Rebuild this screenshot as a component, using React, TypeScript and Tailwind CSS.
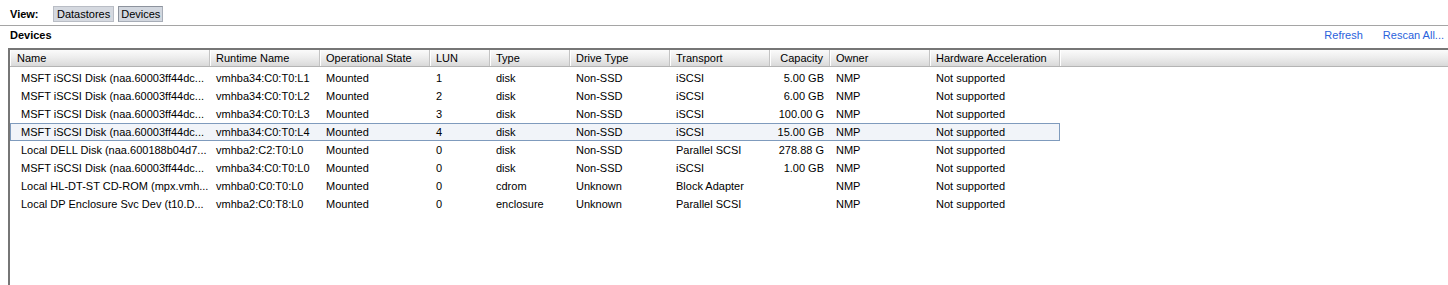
import React from "react";

type Row = {
  name: string;
  runtime: string;
  state: string;
  lun: string;
  type: string;
  drive: string;
  transport: string;
  capacity: string;
  owner: string;
  hw: string;
  selected?: boolean;
};

const rows: Row[] = [
  { name: "MSFT iSCSI Disk (naa.60003ff44dc...", runtime: "vmhba34:C0:T0:L1", state: "Mounted", lun: "1", type: "disk", drive: "Non-SSD", transport: "iSCSI", capacity: "5.00 GB", owner: "NMP", hw: "Not supported" },
  { name: "MSFT iSCSI Disk (naa.60003ff44dc...", runtime: "vmhba34:C0:T0:L2", state: "Mounted", lun: "2", type: "disk", drive: "Non-SSD", transport: "iSCSI", capacity: "6.00 GB", owner: "NMP", hw: "Not supported" },
  { name: "MSFT iSCSI Disk (naa.60003ff44dc...", runtime: "vmhba34:C0:T0:L3", state: "Mounted", lun: "3", type: "disk", drive: "Non-SSD", transport: "iSCSI", capacity: "100.00 G", owner: "NMP", hw: "Not supported" },
  { name: "MSFT iSCSI Disk (naa.60003ff44dc...", runtime: "vmhba34:C0:T0:L4", state: "Mounted", lun: "4", type: "disk", drive: "Non-SSD", transport: "iSCSI", capacity: "15.00 GB", owner: "NMP", hw: "Not supported", selected: true },
  { name: "Local DELL Disk (naa.600188b04d7...", runtime: "vmhba2:C2:T0:L0", state: "Mounted", lun: "0", type: "disk", drive: "Non-SSD", transport: "Parallel SCSI", capacity: "278.88 G", owner: "NMP", hw: "Not supported" },
  { name: "MSFT iSCSI Disk (naa.60003ff44dc...", runtime: "vmhba34:C0:T0:L0", state: "Mounted", lun: "0", type: "disk", drive: "Non-SSD", transport: "iSCSI", capacity: "1.00 GB", owner: "NMP", hw: "Not supported" },
  { name: "Local HL-DT-ST CD-ROM (mpx.vmh...", runtime: "vmhba0:C0:T0:L0", state: "Mounted", lun: "0", type: "cdrom", drive: "Unknown", transport: "Block Adapter", capacity: "", owner: "NMP", hw: "Not supported" },
  { name: "Local DP Enclosure Svc Dev (t10.D...", runtime: "vmhba2:C0:T8:L0", state: "Mounted", lun: "0", type: "enclosure", drive: "Unknown", transport: "Parallel SCSI", capacity: "", owner: "NMP", hw: "Not supported" },
];

const headers: { label: string; w: string; right?: boolean }[] = [
  { label: "Name", w: "w-[200px]" },
  { label: "Runtime Name", w: "w-[110px]" },
  { label: "Operational State", w: "w-[110px]" },
  { label: "LUN", w: "w-[60px]" },
  { label: "Type", w: "w-[80px]" },
  { label: "Drive Type", w: "w-[100px]" },
  { label: "Transport", w: "w-[100px]" },
  { label: "Capacity", w: "w-[60px]", right: true },
  { label: "Owner", w: "w-[100px]" },
  { label: "Hardware Acceleration", w: "w-[130px]" },
];

function Cell({ w, right, children, first }: { w: string; right?: boolean; children: React.ReactNode; first?: boolean }) {
  return (
    <div
      className={`${w} shrink-0 overflow-hidden whitespace-nowrap ${right ? "text-right pr-[6px]" : first ? "pl-[10px]" : "pl-[6px]"}`}
    >
      {children}
    </div>
  );
}

export default function App() {
  return (
    <div className="w-[1448px] h-[285px] bg-white overflow-hidden font-['Liberation_Sans',Arial,sans-serif] text-[11px] leading-[13px] text-black">
      {/* View bar */}
      <div className="flex items-center h-[25px] pl-[10px] pt-[3px]">
        <span className="font-bold w-[43px]">View:</span>
        <button className="h-[16px] px-[3px] bg-[#d5d9e0] border border-[#b9bdc5] leading-[13px]">Datastores</button>
        <button className="ml-[4px] h-[16px] px-[2px] bg-[#d2d7df] border border-[#a7adb7] border-l-[#8d939d] border-t-[#8d939d] leading-[13px]">Devices</button>
      </div>
      <div className="h-px bg-[#a5a5a5]" />
      {/* Title bar */}
      <div className="flex items-center h-[22px] pl-[10px] pr-[4px] pb-[3px]">
        <span className="font-bold">Devices</span>
        <div className="flex-1" />
        <span className="text-[#2a62dc]">Refresh</span>
        <span className="text-[#2a62dc] ml-[20px]">Rescan All...</span>
      </div>
      {/* Table */}
      <div className="ml-[8px] h-[237px] border-t-2 border-l-2 border-[#767676]">
        <div className="flex h-[17px] items-center bg-gradient-to-b from-[#fbfbfb] via-[#ececec] to-[#d9d9d9] border-b border-[#b4b4b4]">
          {headers.map((h, i) => (
            <div
              key={h.label}
              className={`${h.w} shrink-0 h-full flex items-center border-r border-[#c3c3c3] shadow-[inset_1px_0_0_#ffffff] whitespace-nowrap ${h.right ? "justify-end pr-[6px]" : i === 0 ? "pl-[7px]" : "pl-[6px]"}`}
            >
              {h.label}
            </div>
          ))}
          <div className="flex-1 h-full shadow-[inset_1px_0_0_#ffffff]" />
        </div>
        <div className="pt-[2px]">
          {rows.map((r, i) => (
            <div
              key={i}
              className={`flex items-center h-[18px] w-[1050px] ${r.selected ? "bg-[#f1f4f9] border border-[#7f9bbd] -ml-[0px]" : "border border-transparent"}`}
            >
              <Cell w="w-[199px]" first>{r.name}</Cell>
              <Cell w="w-[110px]">{r.runtime}</Cell>
              <Cell w="w-[110px]">{r.state}</Cell>
              <Cell w="w-[60px]">{r.lun}</Cell>
              <Cell w="w-[80px]">{r.type}</Cell>
              <Cell w="w-[100px]">{r.drive}</Cell>
              <Cell w="w-[100px]">{r.transport}</Cell>
              <Cell w="w-[60px]" right>{r.capacity}</Cell>
              <Cell w="w-[100px]">{r.owner}</Cell>
              <Cell w="w-[130px]">{r.hw}</Cell>
            </div>
          ))}
        </div>
      </div>
    </div>
  );
}
